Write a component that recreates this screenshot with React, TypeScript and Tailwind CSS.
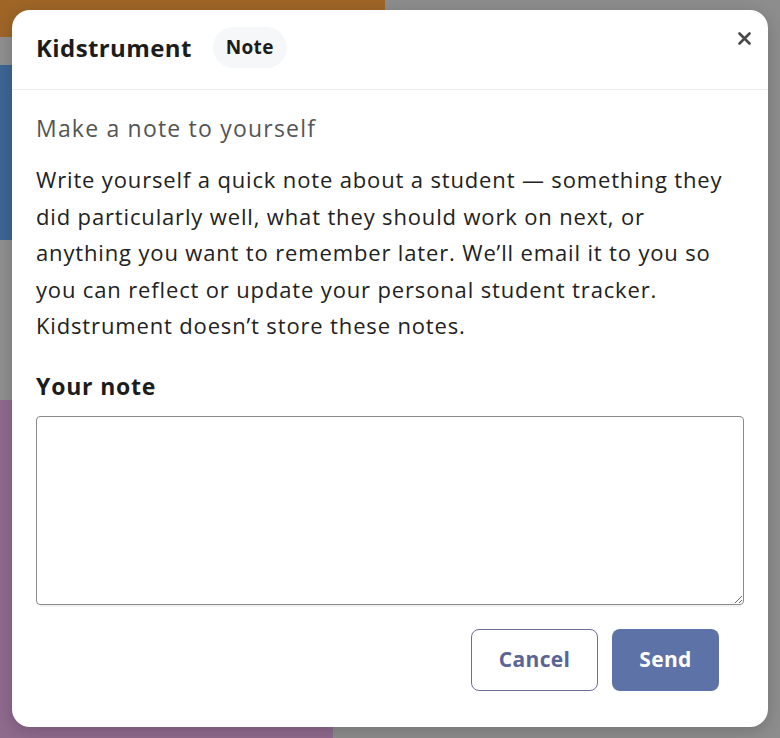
import { useState } from "react";

function CloseIcon() {
  return (
    <svg width="13" height="13" viewBox="0 0 13 13" fill="none">
      <path
        d="M1.5 1.5L11.5 11.5M11.5 1.5L1.5 11.5"
        stroke="#4a4a4a"
        strokeWidth="2.6"
        strokeLinecap="round"
      />
    </svg>
  );
}

function Backdrop() {
  return (
    <div className="flex h-[738px] w-full bg-[#8d8d8d]">
      <div className="flex w-[385px] flex-col">
        <div className="h-[37px] bg-[#9e6527]" />
        <div className="h-[28px] bg-[#8f8f8f]" />
        <div className="h-[175px] w-[60px] bg-[#3d6594]" />
        <div className="h-[160px] bg-[#8f8f8f]" />
        <div className="flex-1 w-[333px] bg-[#8e6a8d]" />
      </div>
      <div className="flex-1" />
    </div>
  );
}

function NoteModal() {
  const [note, setNote] = useState("");

  return (
    <div className="absolute left-[12px] top-[10px] flex h-[717px] w-[756px] flex-col rounded-[18px] bg-white shadow-[0_4px_16px_rgba(0,0,0,0.18)]">
      <div className="relative flex h-[80px] items-center gap-[21px] border-b border-[#ececec] px-6 pb-1">
        <h1 className="text-[24px] font-bold tracking-[0.4px] text-[#1c1c1c]">
          Kidstrument
        </h1>
        <span className="rounded-full bg-[#f6f7f9] px-[13px] py-[6px] text-[19px] font-bold tracking-[0.3px] text-[#1c1c1c]">
          Note
        </span>
        <button className="absolute right-[13px] top-[18px] p-1">
          <CloseIcon />
        </button>
      </div>

      <div className="flex flex-1 flex-col px-6 pt-[22px]">
        <h2 className="text-[23px] leading-[32px] tracking-[1.2px] text-[#555555]">
          Make a note to yourself
        </h2>
        <p className="mt-[17px] text-[22px] leading-[36.6px] tracking-[0.85px] text-[#222222]">
          Write yourself a quick note about a student — something they
          <br />
          did particularly well, what they should work on next, or
          <br />
          anything you want to remember later. We’ll email it to you so
          <br />
          you can reflect or update your personal student tracker.
          <br />
          Kidstrument doesn’t store these notes.
        </p>

        <label className="mt-[26px] text-[23px] font-bold leading-[32px] tracking-[0.8px] text-[#1c1c1c]">
          Your note
        </label>
        <textarea
          value={note}
          onChange={(e) => setNote(e.target.value)}
          className="mt-[14px] h-[189px] w-full resize-y rounded-[4px] border border-[#8a8a8a] p-3 text-[18px] shadow-[0_6px_0_-4px_#f2f2f2] outline-none"
        />

        <div className="mr-[25px] mt-[24px] flex justify-end gap-[14px]">
          <button className="h-[62px] w-[127px] rounded-[8px] border border-[#6b7096] bg-white text-[21px] font-bold tracking-[0.3px] text-[#5b6593]">
            Cancel
          </button>
          <button className="h-[62px] w-[107px] rounded-[8px] bg-[#5d72a6] text-[21px] font-bold tracking-[0.3px] text-white">
            Send
          </button>
        </div>
      </div>
    </div>
  );
}

export default function App() {
  return (
    <div className="relative h-[738px] w-full overflow-hidden font-['Open_Sans','Noto_Sans',sans-serif]">
      <Backdrop />
      <NoteModal />
    </div>
  );
}
